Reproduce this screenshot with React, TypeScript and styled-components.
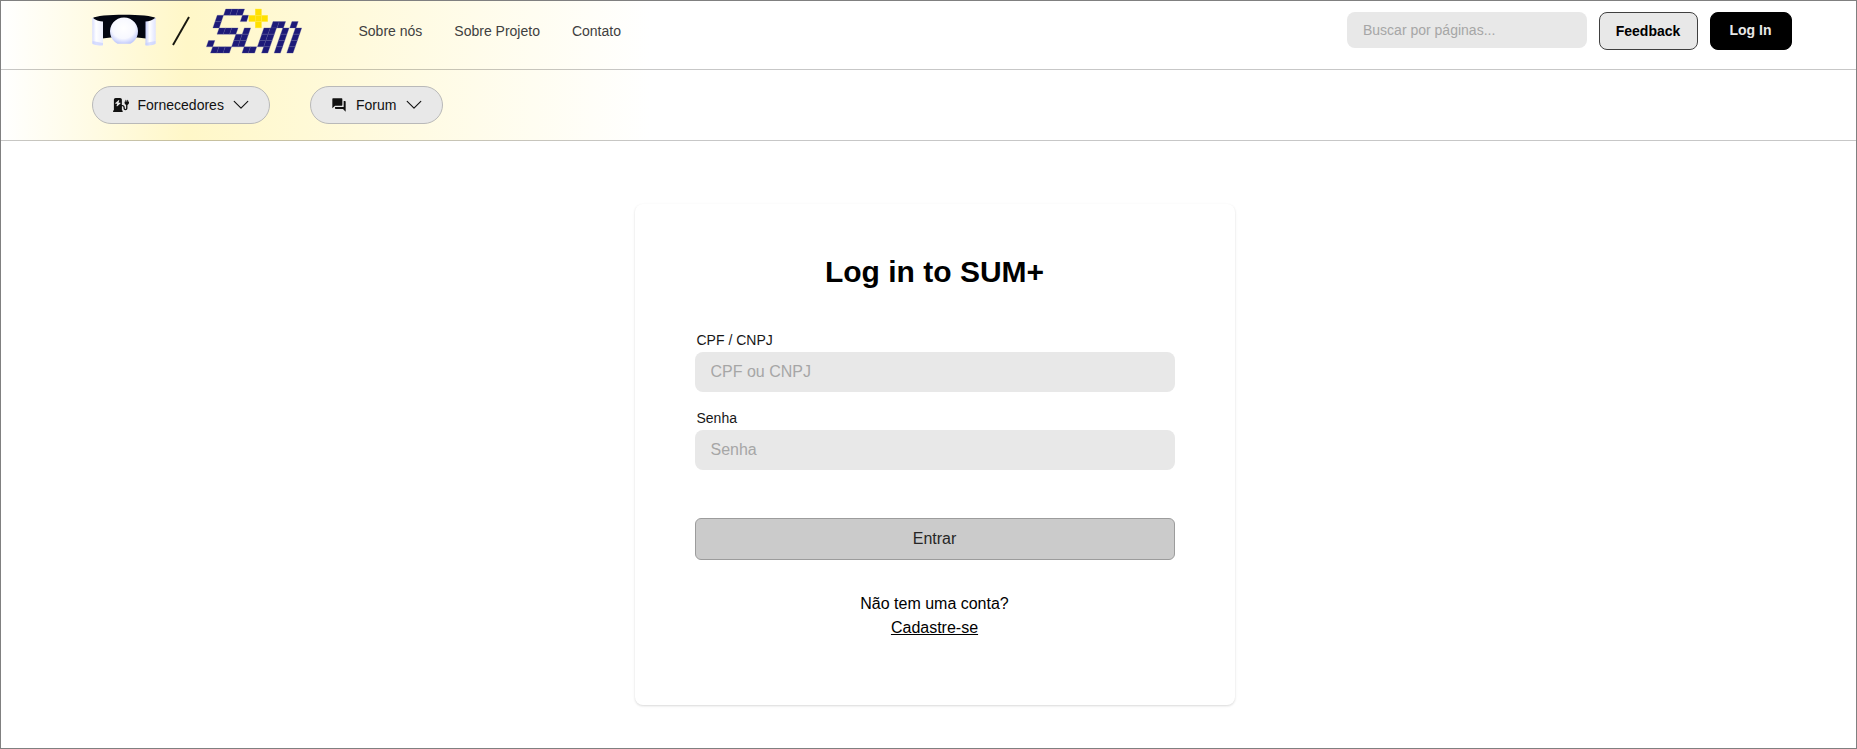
import React from 'react';
import styled, { createGlobalStyle } from 'styled-components';
import { FaChargingStation } from 'react-icons/fa6';
import { MdForum } from 'react-icons/md';

const GlobalStyle = createGlobalStyle`
  *, *::before, *::after { box-sizing: border-box; }
  body {
    margin: 0;
    background: #fff;
    color: #000;
    font-family: "Liberation Sans", Arial, sans-serif;
    font-size: 16px;
    line-height: 24px;
  }
  button, input { font: inherit; color: inherit; margin: 0; }
`;

const Page = styled.div`
  height: 749px;
  display: flex;
  flex-direction: column;
  border: 1px solid #808080;
  overflow: hidden;
`;

const Header = styled.header`
  background: linear-gradient(90deg, #ffffff 0%, #fff7c8 10%, #ffffff 35%);
`;

const TopBar = styled.div`
  display: flex;
  height: 69px;
  padding: 0 64px 0 91px;
  border-bottom: 1px solid rgba(0, 0, 0, 0.22);
`;

const Brand = styled.a`
  display: flex;
  align-items: flex-start;
  height: 60px;
  svg { display: block; }
`;

const Nav = styled.nav`
  display: flex;
  gap: 32px;
  margin-left: 50.5px;
  padding-top: 20px;
`;

const NavLink = styled.a`
  font-size: 14px;
  line-height: 20px;
  color: #404040;
  white-space: nowrap;
`;

const Actions = styled.div`
  display: flex;
  align-items: flex-start;
  gap: 12px;
  margin-left: auto;
  padding-top: 11px;
`;

const Field = styled.input<{ $compact?: boolean }>`
  display: block;
  width: ${(p) => (p.$compact ? '240px' : '100%')};
  height: ${(p) => (p.$compact ? '36px' : '40px')};
  padding: 0 16px;
  border: 0;
  border-radius: 8px;
  background: #e8e8e8;
  font-size: ${(p) => (p.$compact ? '14px' : '16px')};
  outline: none;
  &::placeholder { color: #a6a6a6; opacity: 1; }
`;

const ActionButton = styled.button<{ $primary?: boolean }>`
  width: ${(p) => (p.$primary ? '82px' : '99px')};
  height: 38px;
  padding: ${(p) => (p.$primary ? '0 1px 2px 0' : '0 1px 0 0')};
  border: 1px solid ${(p) => (p.$primary ? '#000' : '#404040')};
  border-radius: 8px;
  background: ${(p) => (p.$primary ? '#000' : '#e8e8e8')};
  color: ${(p) => (p.$primary ? '#e8e8e8' : '#000')};
  font-size: 14px;
  font-weight: 700;
  line-height: 20px;
`;

const SubBar = styled.div`
  display: flex;
  align-items: center;
  gap: 40px;
  height: 71px;
  padding-left: 91px;
  border-bottom: 1px solid rgba(0, 0, 0, 0.22);
`;

const Pill = styled.button`
  display: flex;
  align-items: center;
  gap: 8.5px;
  height: 38px;
  padding: 0 20px;
  border: 1px solid #b9b9b9;
  border-radius: 19px;
  background: #e8e8e8;
  color: #111;
  font-size: 14px;
  line-height: 20px;
  svg { display: block; }
`;

const Main = styled.main`
  flex: 1;
  display: flex;
  justify-content: center;
  align-items: flex-start;
  padding-top: 63px;
  padding-left: 12px;
`;

const Card = styled.form`
  width: 600px;
  height: 501px;
  padding: 48px 60px 0;
  border-radius: 8px;
  background: #fff;
  box-shadow: 0 1px 3px rgba(0, 0, 0, 0.1), 0 1px 2px rgba(0, 0, 0, 0.06);
`;

const Title = styled.h1`
  margin: 0 0 38px;
  font-size: 30px;
  line-height: 40px;
  font-weight: 700;
  text-align: center;
`;

const FieldGroup = styled.label`
  display: block;
  margin-bottom: 16px;
`;

const FieldLabel = styled.span`
  display: block;
  padding: 2px 0 0 2px;
  height: 22px;
  font-size: 14px;
  line-height: 16px;
  color: #171717;
`;

const Submit = styled.button`
  display: block;
  width: 100%;
  height: 42px;
  margin-top: 48px;
  border: 1px solid #9c9c9c;
  border-radius: 6px;
  background: #cbcbcb;
  color: #262626;
`;

const Signup = styled.div`
  display: flex;
  flex-direction: column;
  align-items: center;
  margin-top: 32px;
`;

const SignupLink = styled.a`
  text-decoration: underline;
`;

function ArenaLogo() {
  return (
    <svg width="64" height="60" viewBox="92 1 64 60">
      <defs>
        <radialGradient id="ball" cx="0.48" cy="0.4" r="0.62">
          <stop offset="0" stopColor="#ffffff" />
          <stop offset="0.65" stopColor="#f7f8ff" />
          <stop offset="1" stopColor="#c0c9fc" />
        </radialGradient>
        <linearGradient id="left" x1="0" x2="1">
          <stop offset="0" stopColor="#d9deff" />
          <stop offset="0.35" stopColor="#ffffff" />
          <stop offset="1" stopColor="#eceefd" />
        </linearGradient>
        <linearGradient id="right" x1="0" x2="1">
          <stop offset="0" stopColor="#c5cdfb" />
          <stop offset="0.4" stopColor="#ffffff" />
          <stop offset="1" stopColor="#dfe3ff" />
        </linearGradient>
      </defs>
      <path d="M93 18 C97 13.5 151 13.5 155.5 18 L154 21.5 L146 22 V38.5 L124 36 L102 38.5 V22 L94 21Z" fill="#030611" />
      <path d="M92.3 17.5 Q97 21.5 103 21.5 V45.2 Q96 46.2 92.3 43.5Z" fill="url(#left)" />
      <path d="M155.7 17.5 Q151 21.5 145.5 21.5 V45.2 Q152 46.2 155.7 43.5Z" fill="url(#right)" />
      <path d="M92.5 41 L103 43 V45.2 Q96 46 92.5 44Z M155.5 41 L145.5 43 V45.2 Q152 46 155.5 44Z" fill="#c4ceff" opacity="0.65" />
      <path d="M117.5 43.8 A14 14 0 1 1 130.5 43.8Z" fill="url(#ball)" />
    </svg>
  );
}

function Slash() {
  return (
    <svg width="50" height="60" viewBox="156 1 50 60">
      <path d="M173 45 L189 17" stroke="#17170f" strokeWidth="1.9" fill="none" />
    </svg>
  );
}

/* Filled columns of the slanted wordmark grid, one list per row. */
const wordmarkRows = [
  [1, 2, 3],
  [0, 4],
  [0, 9.2, 10.2, 12.2],
  [1, 2, 3, 5, 8.1, 9.1, 11.1, 13.1],
  [4, 5, 8.1, 9.1, 11.1, 13.1],
  [0, 4, 5, 8.1, 9.1, 11.1, 13.1],
  [1, 2, 3, 6, 7, 9.1, 11.1, 13.1],
];
const plusCells = [[1, 0], [0, 1], [1, 1], [2, 1], [1, 2]];
const CELL = 6.3;
const SLANT = 2.17;

function SumLogo() {
  return (
    <svg width="102" height="60" viewBox="206 1 102 60">
      {wordmarkRows.flatMap((cols, r) =>
        cols.map((c) => {
          const x = 204.2 + c * CELL + (6 - r) * SLANT;
          const y = 9 + r * CELL;
          return (
            <path
              key={`${r}-${c}`}
              d={`M${x} ${y + CELL} L${x + SLANT} ${y} h${CELL} L${x + CELL} ${y + CELL}Z`}
              fill="#1d1a78"
              stroke="#5a58a0"
              strokeWidth="0.3"
            />
          );
        }),
      )}
      {plusCells.map(([cx, cy]) => (
        <rect
          key={`${cx}-${cy}`}
          x={248.9 + cx * CELL}
          y={9 + cy * CELL}
          width={CELL}
          height={CELL}
          fill="#ffe000"
          stroke="#ffe94a"
          strokeWidth="0.4"
        />
      ))}
    </svg>
  );
}

function Chevron() {
  return (
    <svg width="17" height="16" viewBox="0 0 17 16">
      <path d="M2.2 4.4 L9 11.1 L15.8 4.4" fill="none" stroke="#111" strokeWidth="1.15" strokeLinecap="round" strokeLinejoin="round" />
    </svg>
  );
}

export default function App() {
  return (
    <>
      <GlobalStyle />
      <Page>
        <Header>
          <TopBar>
            <Brand>
              <ArenaLogo />
              <Slash />
              <SumLogo />
            </Brand>
            <Nav>
              <NavLink>Sobre nós</NavLink>
              <NavLink>Sobre Projeto</NavLink>
              <NavLink>Contato</NavLink>
            </Nav>
            <Actions>
              <Field $compact placeholder="Buscar por páginas..." />
              <ActionButton>Feedback</ActionButton>
              <ActionButton $primary>Log In</ActionButton>
            </Actions>
          </TopBar>
          <SubBar>
            <Pill>
              <FaChargingStation size={16} />
              Fornecedores
              <Chevron />
            </Pill>
            <Pill>
              <MdForum size={16} />
              Forum
              <Chevron />
            </Pill>
          </SubBar>
        </Header>
        <Main>
          <Card>
            <Title>Log in to SUM+</Title>
            <FieldGroup>
              <FieldLabel>CPF / CNPJ</FieldLabel>
              <Field placeholder="CPF ou CNPJ" />
            </FieldGroup>
            <FieldGroup>
              <FieldLabel>Senha</FieldLabel>
              <Field type="password" placeholder="Senha" />
            </FieldGroup>
            <Submit type="button">Entrar</Submit>
            <Signup>
              <span>Não tem uma conta?</span>
              <SignupLink>Cadastre-se</SignupLink>
            </Signup>
          </Card>
        </Main>
      </Page>
    </>
  );
}
